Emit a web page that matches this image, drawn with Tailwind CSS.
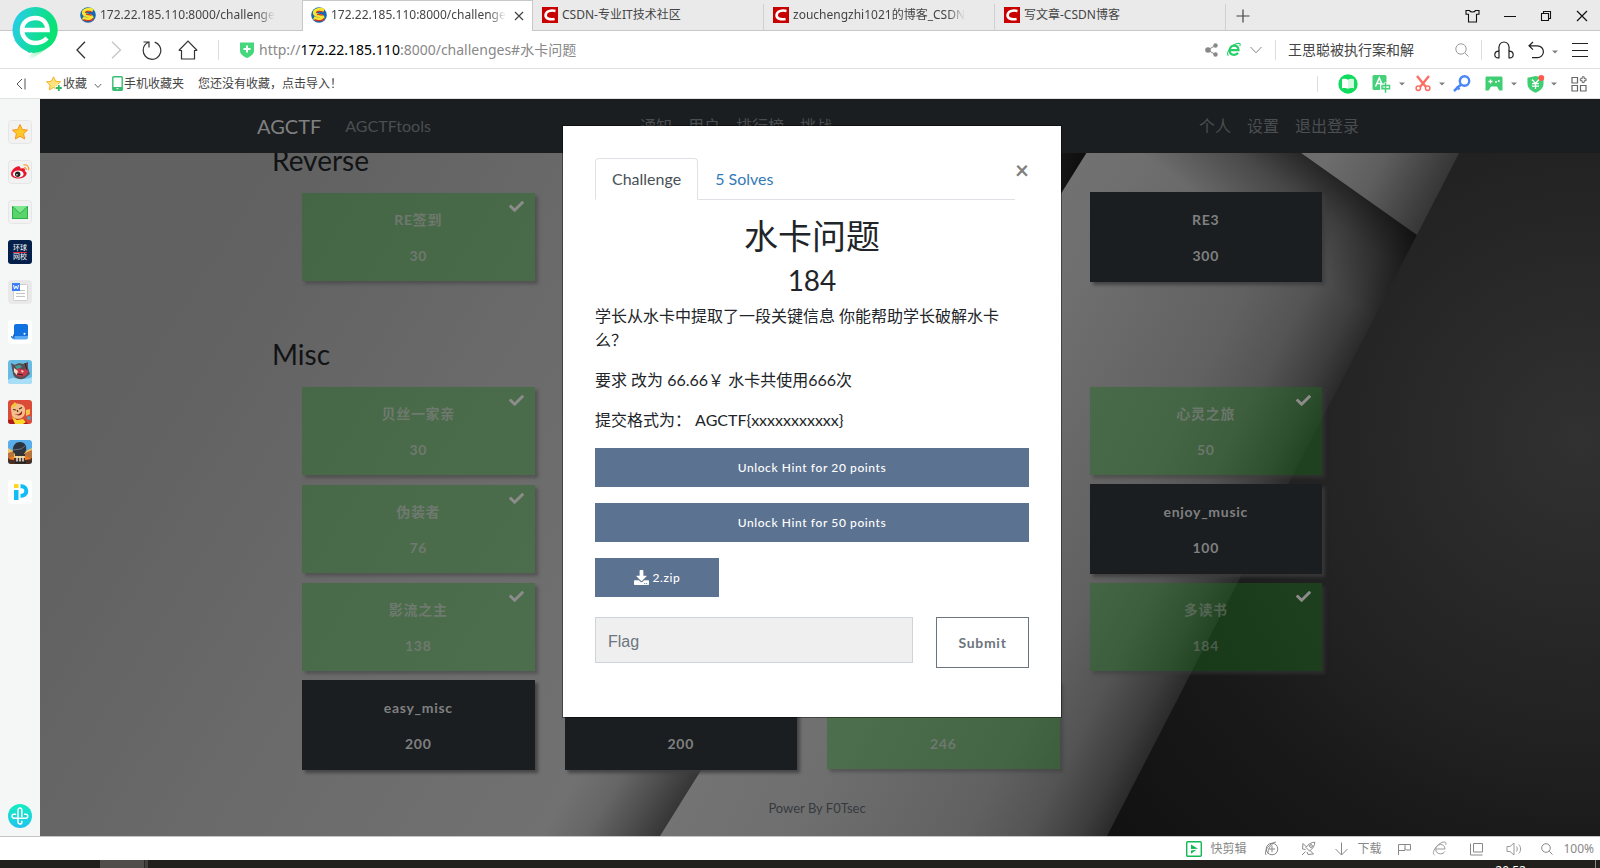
<!DOCTYPE html>
<html lang="zh-CN">
<head>
  <meta charset="UTF-8" />
  <meta name="viewport" content="width=device-width, initial-scale=1.0"/>
  <title>AGCTF</title>
  <script src="https://cdn.jsdelivr.net/npm/@tailwindcss/browser@4"></script>
</head>
<body class="h-screen flex flex-col overflow-hidden bg-white text-xs text-[#444] font-['Noto_Sans','Noto_Sans_CJK_SC',sans-serif]">

  <!-- shared icons -->
  <svg class="hidden">
    <symbol id="check" viewBox="0 0 512 512"><path fill="currentColor" d="M173.9 439.4l-166.4-166.4c-10-10-10-26.2 0-36.2l36.2-36.2c10-10 26.2-10 36.2 0L192 312.7 432.1 72.6c10-10 26.2-10 36.2 0l36.2 36.2c10 10 10 26.2 0 36.2l-294.4 294.4c-10 10-26.2 10-36.2 0z"/></symbol>
    <symbol id="caret" viewBox="0 0 6 4"><path fill="#808080" d="M0 .5h6L3 3.5z"/></symbol>
    <symbol id="site" viewBox="0 0 16 16">
      <circle cx="8" cy="8" r="7.8" fill="#1668b0"/>
      <path d="M13 3.600C9 1.500 3 2.800 3.600 6.200 4.400 9.200 11.800 7.800 11.800 10.500 11.500 13 6 12.600 2.800 10.800" fill="none" stroke="#f7e531" stroke-width="3.400"/>
      <path d="M12 5.200C8.500 3.400 5.200 4.500 5.600 6M3.500 12.600c3.500 1.800 8.800 1.400 9.700-1.400M6 7.200c2 .6 4 .4 5.500 1.200" fill="none" stroke="#d2342a" stroke-width="1.200"/>
    </symbol>
    <symbol id="csdn" viewBox="0 0 16 16">
      <rect width="16" height="16" fill="#c80000"/>
      <path d="M13.500 3.900C8.500 2.800 4 4.200 3.600 8c-.3 3.800 4.400 4.900 9 3.900" fill="none" stroke="#fff" stroke-width="2.600"/>
    </symbol>
  </svg>

  <!-- tab strip -->
  <header class="relative flex flex-none h-[31px] pl-[71px] bg-[#eaeaea]">
    <div class="absolute inset-x-0 bottom-0 h-px bg-[#c8c8c8]"></div>
    <svg class="absolute left-3 top-[7px] z-10" width="46" height="56" viewBox="0 0 46 56">
      <defs>
        <linearGradient id="lg" x1="0" y1=".3" x2="1" y2=".6"><stop offset="0" stop-color="#27cdea"/><stop offset=".55" stop-color="#14dc9c"/><stop offset="1" stop-color="#05e468"/></linearGradient>
        <linearGradient id="lt" x1=".8" y1="0" x2=".3" y2="1"><stop offset="0" stop-color="#05e468"/><stop offset="1" stop-color="#05e468" stop-opacity="0"/></linearGradient>
      </defs>
      <path d="M2 33L17 46 30 40z" fill="#2fc9ee"/>
      <path d="M44 28C42 40 26 47 16 55l-3-1 8-9z" fill="url(#lt)"/>
      <path d="M23 0a22.500 22.500 0 0 1 16 38.500C32 44 27 45 22.500 46 10 45 .5 35 .5 22.500A22.500 22.500 0 0 1 23 0z" fill="url(#lg)"/>
      <path d="M12 23h23.500C35 15 30 11 23.500 11 15.500 11 10 16 10 23s5.500 13 13.500 13c4.500 0 8.500-1.800 11.500-5" fill="none" stroke="#fff" stroke-width="4.500"/>
    </svg>
    <button class="flex items-start w-[231px] pt-[7px] pl-[9px] gap-1 text-left">
      <svg width="16" height="16" class="flex-none"><use href="#site"/></svg>
      <span class="leading-4 whitespace-nowrap mask-r-from-90%">172.22.185.110:8000/challenge</span>
    </button>
    <div class="relative flex items-start w-[231px] bg-white border-x border-t border-[#c8c8c8] pt-[6px] pl-2">
      <button class="flex gap-1 text-left">
        <svg width="16" height="16" class="flex-none"><use href="#site"/></svg>
        <span class="leading-4 whitespace-nowrap mask-r-from-90%">172.22.185.110:8000/challenge</span>
      </button>
      <button class="ml-2 mt-1" aria-label="关闭标签"><svg width="10" height="10" viewBox="0 0 10 10"><path d="M1 1l8 8M9 1L1 9" stroke="#444" stroke-width="1.200"/></svg></button>
    </div>
    <button class="flex items-start w-[231px] pt-[7px] pl-[9px] gap-1 text-left bg-linear-to-t from-[#d0d0d0] to-[#d0d0d0] bg-[length:1px_27px] bg-right-bottom bg-no-repeat">
      <svg width="16" height="16" class="flex-none"><use href="#csdn"/></svg>
      <span class="leading-4 whitespace-nowrap">CSDN-专业IT技术社区</span>
    </button>
    <button class="flex items-start w-[231px] pt-[7px] pl-[9px] gap-1 text-left bg-linear-to-t from-[#d0d0d0] to-[#d0d0d0] bg-[length:1px_27px] bg-right-bottom bg-no-repeat">
      <svg width="16" height="16" class="flex-none"><use href="#csdn"/></svg>
      <span class="leading-4 whitespace-nowrap mask-r-from-90%">zouchengzhi1021的博客_CSDN</span>
    </button>
    <button class="flex items-start w-[231px] pt-[7px] pl-[9px] gap-1 text-left bg-linear-to-t from-[#d0d0d0] to-[#d0d0d0] bg-[length:1px_27px] bg-right-bottom bg-no-repeat">
      <svg width="16" height="16" class="flex-none"><use href="#csdn"/></svg>
      <span class="leading-4 whitespace-nowrap">写文章-CSDN博客</span>
    </button>
    <button class="self-center ml-[10px]" aria-label="新标签"><svg width="14" height="14" viewBox="0 0 14 14"><path d="M7 .5v13M.5 7h13" stroke="#444" stroke-width="1.200"/></svg></button>
    <div class="flex items-center gap-6 ml-auto pr-3 text-[#111]">
      <button aria-label="皮肤"><svg width="15" height="14" viewBox="0 0 15 14"><path d="M1 1.500h3.500c.6 2 5.400 2 6 0H14v3.700h-2.500V13h-8V5.200H1z" fill="none" stroke="currentColor" stroke-width="1.100"/></svg></button>
      <button aria-label="最小化"><svg width="12" height="12" viewBox="0 0 12 12"><path d="M0 6.500h12" stroke="currentColor"/></svg></button>
      <button aria-label="还原"><svg width="12" height="12" viewBox="0 0 12 12"><path d="M1.500 3.500h7v7h-7zM3.500 3.500v-2h7v7h-2" fill="none" stroke="currentColor" stroke-width="1.100"/></svg></button>
      <button aria-label="关闭"><svg width="12" height="12" viewBox="0 0 12 12"><path d="M1 1l10 10M11 1L1 11" stroke="currentColor" stroke-width="1.200"/></svg></button>
    </div>
  </header>

  <!-- address bar -->
  <div class="flex flex-none items-center h-[38px] pl-[76px] pr-3 border-b border-[#e0e0e0]">
    <button class="mr-6" aria-label="后退"><svg width="10" height="18" viewBox="0 0 10 18"><path d="M9 .8L1 9l8 8.200" fill="none" stroke="#333" stroke-width="1.300"/></svg></button>
    <button class="mr-5" aria-label="前进"><svg width="12" height="18" viewBox="0 0 12 18"><path d="M2 .8L10.500 9 2 17.200" fill="none" stroke="#c4c4c4" stroke-width="1.300"/></svg></button>
    <button class="mr-4" aria-label="刷新"><svg width="20" height="20" viewBox="0 0 20 20"><path d="M1.500 2H7v5.500M7 2C3 3.500 1.200 6.800 1.200 10.300a8.800 8.800 0 1 0 11.500-8.200" fill="none" stroke="#333" stroke-width="1.200"/></svg></button>
    <button class="mr-5" aria-label="主页"><svg width="20" height="20" viewBox="0 0 20 20"><path d="M.8 10.500L10 1.200l9.200 9.300M.8 10.500h2.700V19h13v-8.500h2.700" fill="none" stroke="#333" stroke-width="1.200"/></svg></button>
    <div class="w-px h-5 mr-5 bg-[#dcdcdc]"></div>
    <svg width="16" height="16" viewBox="0 0 16 16" class="mr-1"><path d="M1 .5h14v8.500c0 3-3.500 5.500-7 7-3.500-1.500-7-4-7-7z" fill="#45d77c"/><path d="M8 3.500v7M4.500 7h7" stroke="#fff" stroke-width="2"/></svg>
    <a href="#水卡问题" class="text-sm leading-5 text-[#888]">http://<span class="text-black">172.22.185.110</span>:8000/challenges#水卡问题</a>
    <div class="flex items-center ml-auto">
      <button class="mr-2" aria-label="分享"><svg width="13" height="14" viewBox="0 0 13 14"><path d="M2.500 7l8-4.500M2.500 7l8 4.500" stroke="#888"/><circle cx="3" cy="7" r="2.800" fill="#888"/><circle cx="10.500" cy="2.500" r="2.200" fill="#888"/><circle cx="10.500" cy="11.500" r="2.200" fill="#888"/></svg></button>
      <button class="mr-2" aria-label="极速模式"><svg width="15" height="15" viewBox="0 0 15 15"><path d="M4 8.200h8.500C12.500 5 10.500 3.600 8.200 3.600 5.400 3.600 3.700 5.800 3.700 8.500s1.800 4.300 4.300 4.300c1.900 0 3.200-.6 4-1.900" fill="none" stroke="#26cf6a" stroke-width="2.200"/><path d="M2.500 13.500C-1 11.500 6 1.500 12.500 1.200c2 0 2 1.300 1.300 2.800" fill="none" stroke="#26cf6a" stroke-width="1.100"/></svg></button>
      <button class="mr-3" aria-label="展开"><svg width="14" height="8" viewBox="0 0 14 8"><path d="M1.500 1L7 6.800 12.500 1" fill="none" stroke="#888"/></svg></button>
      <div class="w-px h-5 mr-3 bg-[#dcdcdc]"></div>
      <input type="text" aria-label="搜索" value="王思聪被执行案和解" class="w-[167px] text-sm leading-5 text-[#444] outline-none">
      <button class="mr-3" aria-label="搜索"><svg width="14" height="14" viewBox="0 0 14 14"><circle cx="6" cy="6" r="5.200" fill="none" stroke="#999"/><path d="M9.800 9.800l3.700 3.700" stroke="#999"/></svg></button>
      <div class="w-px h-5 mr-3 bg-[#dcdcdc]"></div>
      <button class="mr-[14px]" aria-label="音乐"><svg width="20" height="18" viewBox="0 0 20 18"><path d="M5 10.200C4 4 6.500 1 10 1s6 3 5 9.200" fill="none" stroke="#222" stroke-width="1.200"/><path d="M5 10.200v6.600C2 17.500.8 15.500.8 13.700S2.200 10.300 5 10.200zM15 10.200v6.600c3 .7 4.200-1.300 4.200-3.100s-1.400-3.400-4.200-3.500z" fill="none" stroke="#222" stroke-width="1.200"/></svg></button>
      <button class="flex items-center gap-2 mr-[14px]" aria-label="恢复"><svg width="16" height="18" viewBox="0 0 16 18"><path d="M5 1L1 4.800 5 8.600M1 4.800h8.500a5.900 5.900 0 0 1 0 11.800H4" fill="none" stroke="#222" stroke-width="1.200"/></svg><svg width="6" height="4" class="mt-1"><use href="#caret"/></svg></button>
      <button aria-label="菜单"><svg width="16" height="14" viewBox="0 0 16 14"><path d="M0 .5h16M0 7.500h16M0 13.500h16" stroke="#222"/></svg></button>
    </div>
  </div>

  <!-- bookmarks -->
  <div class="flex flex-none items-center h-[30px] pl-4 pr-[13px] border-b border-[#e0e3e2]">
    <button class="mr-5" aria-label="收起"><svg width="10" height="12" viewBox="0 0 10 12"><path d="M6 1L1 6l5 5M9 .5v11" fill="none" stroke="#555"/></svg></button>
    <button class="flex items-center">
      <svg width="17" height="16" viewBox="0 0 17 16"><path d="M7.500.8l2.100 4.400 4.900.6-3.600 3.300 1 4.800-4.400-2.400-4.300 2.400.9-4.800L.5 5.800l4.900-.6z" fill="#fde37c" stroke="#f0b429"/><path d="M12.800 8.500v7M9.300 12h7" stroke="#fff" stroke-width="4"/><path d="M12.800 9v6M9.800 12h6" stroke="#2fb865" stroke-width="1.800"/></svg>
      <span>收藏</span>
      <svg width="8" height="6" viewBox="0 0 8 6" class="ml-[7px] mt-1"><path d="M.8 1L4 4.500 7.200 1" fill="none" stroke="#666"/></svg>
    </button>
    <button class="flex items-center ml-[10px] mr-[14px] gap-px"><svg width="11" height="15" viewBox="0 0 11 15"><rect x=".8" y=".8" width="9.400" height="13.400" rx=".8" fill="#fff" stroke="#37bd70" stroke-width="1.400"/><path d="M1 11h9v3H1z" fill="#37bd70"/><path d="M4.500 12.700h2" stroke="#fff"/></svg><span>手机收藏夹</span></button>
    <span>您还没有收藏，点击导入！</span>
    <div class="flex items-center ml-auto">
      <div class="w-px h-4 mr-5 bg-[#dcdcdc]"></div>
      <button class="mr-[14px]" aria-label="小说"><svg width="20" height="20" viewBox="0 0 20 20"><circle cx="10" cy="10" r="9.700" fill="#0fdc5c"/><path d="M4 5.300c2.500-.8 4.500-.6 6 .5v9c-1.500-.9-3.500-1-6-.5z" fill="#fff"/><path d="M16 5.300c-2.500-.8-4.500-.6-6 .5v9c1.500-.9 3.500-1 6-.5z" fill="#d4f9e1"/></svg></button>
      <button class="flex items-center gap-2 mr-[10px]" aria-label="翻译"><svg width="19" height="19" viewBox="0 0 19 19"><rect x=".5" y="1" width="14" height="15" rx="1.500" fill="#45d07a"/><path d="M3.500 12.500L7.300 4l3.600 8.500M4.800 9.500h4.800" fill="none" stroke="#fff" stroke-width="1.500"/><path d="M13.500 8.500V19M9.500 11h8.200v4H9.500z" fill="none" stroke="#fff" stroke-width="3"/><path d="M13.500 9v9.800M10 11.500h7.500v3.200H10z" fill="none" stroke="#45d07a" stroke-width="1.500"/></svg><svg width="6" height="4"><use href="#caret"/></svg></button>
      <button class="flex items-center gap-2 mr-2" aria-label="截图"><svg width="16" height="17" viewBox="0 0 16 17"><path d="M2 1l9 11M14 1L5 12" stroke="#fb6f64" stroke-width="2.400"/><circle cx="3.300" cy="13.300" r="2.200" fill="none" stroke="#fb6f64" stroke-width="1.500"/><circle cx="12.700" cy="13.300" r="2.200" fill="none" stroke="#fb6f64" stroke-width="1.500"/></svg><svg width="6" height="4"><use href="#caret"/></svg></button>
      <button class="mr-[14px]" aria-label="密码"><svg width="18" height="17" viewBox="0 0 18 17"><circle cx="11.500" cy="6" r="4.700" fill="none" stroke="#4a86f7" stroke-width="2.400"/><path d="M8 9.500L1 16M3.500 11.500l3 3" stroke="#4a86f7" stroke-width="2.400"/></svg></button>
      <button class="flex items-center gap-2 mr-[10px]" aria-label="游戏"><svg width="18" height="15" viewBox="0 0 18 15"><path d="M2 .5h14c1 0 1.500.6 1.500 1.500v12.500h-3.200L12 10.500H6L3.700 14.500H.5V2C.5 1.100 1 .5 2 .5z" fill="#3fce72"/><path d="M5.500 3.500v4M3.500 5.500h4" stroke="#fff" stroke-width="1.300"/><circle cx="11" cy="6" r="1" fill="#fff"/><circle cx="13.800" cy="5" r="1" fill="#fff"/></svg><svg width="6" height="4"><use href="#caret"/></svg></button>
      <button class="flex items-center gap-[6px] mr-[14px]" aria-label="网银"><svg width="18" height="18" viewBox="0 0 18 18"><path d="M8.500 1L16.500 2.800V9c0 4-3.500 7-8 8.800C4 16 .5 13 .5 9V2.800z" fill="#3fce72"/><path d="M5 4.500l3.500 4 3.500-4M5 8.700h7M5 11.200h7M8.500 8.500V14" fill="none" stroke="#fff" stroke-width="1.300"/><circle cx="14.300" cy="3" r="2.900" fill="#ff5a4e"/></svg><svg width="6" height="4"><use href="#caret"/></svg></button>
      <button aria-label="扩展"><svg width="16" height="16" viewBox="0 0 16 16"><path d="M1 1.500h5.500v5.500H1zM1 9.500h5.500V15H1zM9.500 9.500H15V15H9.500z" fill="none" stroke="#666" stroke-width="1.200"/><path d="M11.200.8h2v1.900h1.900v2h-1.900v1.900h-2V4.700H9.300v-2h1.900z" fill="none" stroke="#666"/></svg></button>
    </div>
  </div>

  <main class="flex flex-1 min-h-0">
    <!-- side bar -->
    <aside class="flex flex-col flex-none items-center w-10 pt-[21px] pb-[6px] gap-4 bg-[#f4f7f6]">
      <button aria-label="收藏夹"><svg width="24" height="24" viewBox="0 0 24 24"><rect x=".5" y=".5" width="23" height="23" rx="3" fill="#f2f2f2" stroke="#e6e6e6"/><path d="M12 4.500l2.300 5 5.200.6-3.900 3.600 1.100 5.300L12 16.300 7.300 19l1.100-5.300-3.900-3.600 5.200-.6z" fill="#ffc928" stroke="#f7941e"/></svg></button>
      <button aria-label="微博"><svg width="24" height="24" viewBox="0 0 24 24"><rect x=".5" y=".5" width="23" height="23" rx="3" fill="#f2f2f2" stroke="#e6e6e6"/><path d="M3 14c0-4 5.500-8.500 8.500-7.500 1.200.4 1 2 1 2s4.500-1.200 4.500 1.200c0 .8-.4 1.300-.4 1.300 4.400 1.500 1.400 7.500-6 7.500C6.500 18.500 3 17 3 14z" fill="#e6162d"/><ellipse cx="10.300" cy="14" rx="5.300" ry="3.600" fill="#fff"/><circle cx="9.700" cy="14.200" r="2.700" fill="#222"/><circle cx="8.900" cy="14.800" r=".8" fill="#fff"/><path d="M15.500 5c3.500-.8 6 2 5 5.200M16 7.800c1.500-.3 2.500.8 2.100 2.200" fill="none" stroke="#f9a03f" stroke-width="1.300"/></svg></button>
      <button aria-label="邮箱"><svg width="24" height="24" viewBox="0 0 24 24"><rect x=".5" y=".5" width="23" height="23" rx="3" fill="#f2f2f2" stroke="#e6e6e6"/><rect x="4.500" y="6.500" width="15" height="12" fill="#5bd36b" stroke="#26b34c"/><path d="M4.500 6h15L12 13.500z" fill="#82e690"/><path d="M4.500 6.500l7.500 7 7.500-7" fill="none" stroke="#26b34c"/></svg></button>
      <button aria-label="环球网校" class="flex flex-col items-center justify-center w-6 h-6 rounded-[3px] bg-[#04204a] text-white text-[7px] leading-[8px]"><span class="border-b border-[#e0243a]">环球</span><span>网校</span></button>
      <button aria-label="文档"><svg width="24" height="24" viewBox="0 0 24 24"><rect width="24" height="24" rx="4" fill="#e9e9e9"/><rect x="5.500" y="4.500" width="14" height="16" rx="1" fill="#fff" stroke="#cfcfcf"/><path d="M12 10.500h5M8 13.500h9M8 16.500h9" stroke="#c4c4c4"/><rect x="4" y="3" width="8" height="8" fill="#3d7df5"/><path d="M5.500 5l1 4L8 6l1.500 3 1-4" fill="none" stroke="#fff"/></svg></button>
      <button aria-label="阅读"><svg width="24" height="24" viewBox="0 0 24 24"><rect width="24" height="24" rx="3" fill="#fff"/><path d="M8 4h10c1.200 0 2 .8 2 2v10H6V6c0-1.200.8-2 2-2z" fill="#1272e0"/><path d="M3 16c1.500 1.500 4 0 4 0h13v1.500c0 1-.8 2-2 2H6.500C4.500 19.500 3 18 3 16z" fill="#5aa9f5"/><path d="M3 16.500c2 1.500 3 0 3-2v4" fill="none" stroke="#0d56ba"/><circle cx="16.500" cy="13.800" r="1" fill="#fff"/></svg></button>
      <button aria-label="捕鱼"><svg width="24" height="24" viewBox="0 0 24 24"><rect width="24" height="24" rx="3" fill="#68bce4"/><path d="M0 20c6-5 14 2 24-3v4a3 3 0 0 1-3 3H3a3 3 0 0 1-3-3z" fill="#a8dff6"/><path d="M3 3l4 2c2-2 6-2 8-1l5-2v6l2 6-5 4c-5 3-11 0-12-4z" fill="#5b4f56"/><path d="M7 10l4-2 5 2 3-3 1 5c-2 5-8 6-12 3z" fill="#c8394a"/><path d="M6 8l4 3-1 4-3-3zM13 10l3 1-2 2z" fill="#f0dccb"/><path d="M7 6l5-1 2 2-5 2z" fill="#3f9e94"/><path d="M9 14l6 1M17 3l2 7" stroke="#2a2228"/></svg></button>
      <button aria-label="斗地主"><svg width="24" height="24" viewBox="0 0 24 24"><rect width="24" height="24" rx="3" fill="#dc4a38"/><path d="M3 10C2 5 7 2.500 11 4c5 0 7 4 6 9-1 6-9 8-13 3z" fill="#f4bd8c"/><path d="M3 6l4-4 2 3-5 3z" fill="#f6c42c"/><path d="M7 14c3 1 5 0 7-3 1 4-3 6-7 3z" fill="#8c1c1c"/><path d="M0 20l8-1 9 1 3 4H3a3 3 0 0 1-3-3z" fill="#ad1a1a"/><path d="M4 17l5 3 6-1 3 3-3 2H7z" fill="#ffd62a"/><path d="M5 9.500l3 .5M11 9l3-1.500M9 10l1 2" stroke="#562a18" stroke-width="1.200"/><path d="M18 10l4-1v5l-4 2z" fill="#f7c34d"/><circle cx="21" cy="18" r="2" fill="#4ea1bf"/></svg></button>
      <button aria-label="吃鸡"><svg width="24" height="24" viewBox="0 0 24 24"><rect width="24" height="24" rx="3" fill="#57aeea"/><path d="M0 8l5 3 6-1 7 1 6-3v10H0z" fill="#f2c565"/><path d="M0 13l6-2v7H0zM17 13l7-3v8h-7z" fill="#b9743c"/><path d="M0 18h24v3a3 3 0 0 1-3 3H3a3 3 0 0 1-3-3z" fill="#4a2e22"/><path d="M0 19l6-3v4zM17 16l7 3-7 1z" fill="#f27b23"/><path d="M5 12C4 5 8 2 12 2c5 0 7 4 6 9l-2 3H7z" fill="#2d343d"/><path d="M5 10l8-1 4-3" fill="none" stroke="#69737f"/><path d="M9 14v8M12 14v8M15 14v8" stroke="#e7e2dd" stroke-width="1.500"/><path d="M7 15h10" stroke="#333" stroke-width="2"/><path d="M7 22.500h11" stroke="#222" stroke-width="2"/></svg></button>
      <button aria-label="PP视频"><svg width="24" height="24" viewBox="0 0 24 24"><rect width="24" height="24" rx="3" fill="#fff"/><path d="M6 4h4.500v4H6z" fill="#ffd51d"/><path d="M6 10h4.500v10H6z" fill="#10bdf5"/><path d="M12.500 6.200h1a4.800 4.800 0 0 1 0 9.600h-1" fill="none" stroke="#10bdf5" stroke-width="4"/></svg></button>
      <button class="mt-auto" aria-label="添加"><svg width="24" height="28" viewBox="0 0 24 28"><defs><linearGradient id="ad" x1="0" y1="0" x2="0" y2="1"><stop offset="0" stop-color="#13eec0"/><stop offset="1" stop-color="#1fc3ee"/></linearGradient></defs><circle cx="12" cy="14" r="12" fill="url(#ad)"/><path d="M13.800 14.500V8a1.900 1.900 0 0 0-3.800 0v12.200a1.900 1.900 0 0 0 3.800 0v-1M11.500 16.200h6.300a1.900 1.900 0 0 0 0-3.900h-1.200M7.500 12.300H6a1.900 1.900 0 0 0 0 3.900h3" fill="none" stroke="#fff" stroke-width="1.500" stroke-linecap="round"/></svg></button>
    </aside>

    <!-- web page -->
    <div class="relative flex-1 overflow-hidden font-['Lato','Noto_Sans_CJK_SC',sans-serif]">
      <svg class="absolute inset-0 w-full h-full" viewBox="0 0 1560 737" preserveAspectRatio="none">
        <defs>
          <linearGradient id="left" gradientUnits="userSpaceOnUse" x1="0" y1="0" x2="777" y2="485">
            <stop offset="0" stop-color="#606060"/><stop offset=".3" stop-color="#626262"/><stop offset=".6" stop-color="#6b6b6b"/><stop offset=".89" stop-color="#717171"/><stop offset=".93" stop-color="#666"/><stop offset=".97" stop-color="#4c4c4c"/><stop offset="1" stop-color="#363636"/>
          </linearGradient>
          <linearGradient id="mid" gradientUnits="userSpaceOnUse" x1="0" y1="0" x2="1144" y2="589">
            <stop offset=".68" stop-color="#747474"/><stop offset=".78" stop-color="#6f6f6f"/><stop offset=".9" stop-color="#616161"/><stop offset=".945" stop-color="#545454"/><stop offset=".98" stop-color="#3d3d3d"/><stop offset="1" stop-color="#2a2a2a"/>
          </linearGradient>
          <linearGradient id="fold" gradientUnits="userSpaceOnUse" x1="1319" y1="95" x2="1265" y2="171">
            <stop offset="0" stop-opacity=".6"/><stop offset=".4" stop-opacity=".28"/><stop offset="1" stop-opacity="0"/>
          </linearGradient>
          <linearGradient id="tri" gradientUnits="userSpaceOnUse" x1="0" y1="0" x2="1144" y2="589">
            <stop offset=".91" stop-color="#6d6d6d"/><stop offset=".95" stop-color="#5e5e5e"/><stop offset="1" stop-color="#363636"/>
          </linearGradient>
          <radialGradient id="right" gradientUnits="userSpaceOnUse" cx="1540" cy="340" r="600">
            <stop offset="0" stop-color="#313131"/><stop offset=".52" stop-color="#212121"/><stop offset=".7" stop-color="#191919"/><stop offset="1" stop-color="#121212"/>
          </radialGradient>
          <radialGradient id="corner" gradientUnits="userSpaceOnUse" cx="1047" cy="54" r="150">
            <stop offset="0" stop-opacity=".75"/><stop offset=".4" stop-opacity=".6"/><stop offset="1" stop-opacity="0"/>
          </radialGradient>
        </defs>
        <rect width="1560" height="737" fill="url(#right)"/>
        <path d="M0 0h1447L1067 737H0z" fill="url(#mid)"/>
        <path d="M1080 0h367L1067 737H620z" fill="url(#fold)"/>
        <path d="M1185 0h262l-70 136z" fill="url(#tri)"/>
        <path d="M0 0h1080L620 737H0z" fill="url(#left)"/>
        <path d="M0 0h1080L620 737H0z" fill="url(#corner)"/>
      </svg>

      <div class="relative pr-4">
        <div class="max-w-[1140px] mx-auto px-[30px] pt-[45px]">
          <section class="mb-14">
            <h3 class="text-[28px] leading-8 text-[#111315] mb-4">Reverse</h3>
            <div class="grid grid-cols-4 gap-x-[30px] gap-y-2 px-[30px] text-sm leading-5 font-bold tracking-wider">
              <button class="relative h-[88px] my-px pt-[17px] pb-4 bg-[rgb(27,109,27)]/40 text-[#808080]/70 shadow-[3px_3px_3px_rgba(60,60,60,0.5)]">
                <svg width="15" height="15" class="absolute top-[6px] right-[11px] text-[#8c8c8c]"><use href="#check"/></svg>
                <p class="mb-4">RE签到</p><p>30</p>
              </button>
              <button class="h-[90px] pt-[18px] pb-4 col-start-4 bg-[#1a1e20] text-[#808080] shadow-[3px_3px_3px_rgba(60,60,60,0.8)]"><p class="mb-4">RE3</p><p>300</p></button>
            </div>
          </section>

          <section>
            <h3 class="text-[28px] leading-8 text-[#111315] mb-4">Misc</h3>
            <div class="grid grid-cols-4 gap-x-[30px] gap-y-2 px-[30px] text-sm leading-5 font-bold tracking-wider">
              <button class="relative h-[88px] my-px pt-[17px] pb-4 bg-[rgb(27,109,27)]/40 text-[#808080]/70 shadow-[3px_3px_3px_rgba(60,60,60,0.5)]">
                <svg width="15" height="15" class="absolute top-[6px] right-[11px] text-[#8c8c8c]"><use href="#check"/></svg>
                <p class="mb-4">贝丝一家亲</p><p>30</p>
              </button>
              <button class="relative h-[88px] my-px pt-[17px] pb-4 col-start-4 bg-[rgb(27,109,27)]/40 text-[#808080]/70 shadow-[3px_3px_3px_rgba(60,60,60,0.5)]">
                <svg width="15" height="15" class="absolute top-[6px] right-[11px] text-[#8c8c8c]"><use href="#check"/></svg>
                <p class="mb-4">心灵之旅</p><p>50</p>
              </button>
              <button class="relative h-[88px] my-px pt-[17px] pb-4 bg-[rgb(27,109,27)]/40 text-[#808080]/70 shadow-[3px_3px_3px_rgba(60,60,60,0.5)]">
                <svg width="15" height="15" class="absolute top-[6px] right-[11px] text-[#8c8c8c]"><use href="#check"/></svg>
                <p class="mb-4">伪装者</p><p>76</p>
              </button>
              <button class="h-[90px] pt-[18px] pb-4 col-start-4 bg-[#1a1e20] text-[#808080] shadow-[3px_3px_3px_rgba(60,60,60,0.8)]"><p class="mb-4">enjoy_music</p><p>100</p></button>
              <button class="relative h-[88px] my-px pt-[17px] pb-4 bg-[rgb(27,109,27)]/40 text-[#808080]/70 shadow-[3px_3px_3px_rgba(60,60,60,0.5)]">
                <svg width="15" height="15" class="absolute top-[6px] right-[11px] text-[#8c8c8c]"><use href="#check"/></svg>
                <p class="mb-4">影流之主</p><p>138</p>
              </button>
              <button class="relative h-[88px] my-px pt-[17px] pb-4 col-start-4 bg-[rgb(27,109,27)]/40 text-[#808080]/50 shadow-[3px_3px_3px_rgba(60,60,60,0.5)]">
                <svg width="15" height="15" class="absolute top-[6px] right-[11px] text-[#8c8c8c]"><use href="#check"/></svg>
                <p class="mb-4">多读书</p><p>184</p>
              </button>
              <button class="h-[90px] pt-[18px] pb-4 bg-[#1a1e20] text-[#808080] shadow-[3px_3px_3px_rgba(60,60,60,0.8)]"><p class="mb-4">easy_misc</p><p>200</p></button>
              <button class="h-[90px] pt-[18px] pb-4 bg-[#1a1e20] text-[#808080] shadow-[3px_3px_3px_rgba(60,60,60,0.8)]"><p class="mb-4">&nbsp;</p><p>200</p></button>
              <button class="h-[88px] my-px pt-[17px] pb-4 bg-[rgb(27,109,27)]/40 text-[#808080]/70 shadow-[3px_3px_3px_rgba(60,60,60,0.5)]"><p class="mb-4">&nbsp;</p><p>246</p></button>
            </div>
          </section>
        </div>
        <footer class="pt-7 pl-[10px] text-center text-[13px] leading-5 text-[#363a3e]">Power By F0Tsec</footer>
      </div>

      <nav class="absolute inset-x-0 top-0 pr-4 bg-[#1a1e20] text-base text-[#4b4e50]">
        <div class="flex items-center max-w-[1140px] h-[54px] mx-auto px-[15px]">
          <a href="#" class="mr-4 text-xl text-[#808080]">AGCTF</a>
          <a href="#" class="px-2">AGCTFtools</a>
          <div class="flex ml-[193px]">
            <a href="#" class="px-2">通知</a>
            <a href="#" class="px-2">用户</a>
            <a href="#" class="px-2">排行榜</a>
            <a href="#" class="px-2">挑战</a>
          </div>
          <div class="flex ml-auto">
            <a href="#" class="px-2">个人</a>
            <a href="#" class="px-2">设置</a>
            <a href="#" class="px-2">退出登录</a>
          </div>
        </div>
      </nav>

      <!-- challenge dialog -->
      <div class="absolute inset-x-0 top-[26px] pr-4">
        <div role="dialog" aria-label="水卡问题" class="w-[500px] mx-auto border border-black/40 bg-white bg-clip-padding px-8 pt-8 pb-[49px] text-base text-[#212529]">
          <div class="flex items-start">
            <div class="flex flex-1 border-b border-[#dee2e6]">
              <button class="-mb-px px-4 py-2 border border-[#dee2e6] border-b-white rounded-t bg-white text-[#495057]">Challenge</button>
              <button class="-mb-px px-4 py-2 border border-transparent text-[#337ab7]">5 Solves</button>
            </div>
            <button class="w-[14px] text-2xl leading-6 font-bold text-[#808080]" aria-label="关闭">×</button>
          </div>
          <h2 class="pt-4 mb-2 text-center text-[34px] leading-10">水卡问题</h2>
          <h3 class="mb-2 text-center text-[28px] leading-8">184</h3>
          <p class="mb-4">学长从水卡中提取了一段关键信息 你能帮助学长破解水卡么？</p>
          <p class="mb-4">要求 改为 66.66￥ 水卡共使用666次</p>
          <p class="mb-4">提交格式为： AGCTF{xxxxxxxxxxx}</p>
          <button class="block w-full h-[39px] mb-4 bg-[#5b7290] text-white text-xs font-medium tracking-wider">Unlock Hint for 20 points</button>
          <button class="block w-full h-[39px] mb-4 bg-[#5b7290] text-white text-xs font-medium tracking-wider">Unlock Hint for 50 points</button>
          <a href="#" class="flex items-center justify-center gap-1 w-[124px] h-[39px] mb-5 bg-[#5b7290] text-white text-xs font-medium tracking-wider">
            <svg width="15" height="15" viewBox="0 0 512 512"><path fill="#fff" d="M216 0h80c13.300 0 24 10.700 24 24v168h87.700c17.800 0 26.700 21.500 14.100 34.100L269.700 378.300c-7.500 7.500-19.800 7.500-27.300 0L90.100 226.100c-12.600-12.600-3.700-34.100 14.100-34.100H192V24c0-13.300 10.700-24 24-24zm296 376v112c0 13.300-10.700 24-24 24H24c-13.300 0-24-10.700-24-24V376c0-13.300 10.700-24 24-24h146.700l49 49c20.100 20.100 52.500 20.100 72.600 0l49-49H488c13.300 0 24 10.700 24 24zm-124 88c0-11-9-20-20-20s-20 9-20 20 9 20 20 20 20-9 20-20zm64 0c0-11-9-20-20-20s-20 9-20 20 9 20 20 20 20-9 20-20z"/></svg>
            <span>2.zip</span>
          </a>
          <form class="flex items-start gap-[23px]">
            <input type="text" placeholder="Flag" aria-label="Flag" class="flex-1 min-w-0 h-[46px] px-3 pt-1 border border-[#ced4da] bg-[#efefef] placeholder-[#6c757d] font-['Liberation_Sans',sans-serif]">
            <button type="button" class="w-[93px] h-[51px] border border-[#6c757d] text-[#6c757d] text-sm font-bold tracking-wider">Submit</button>
          </form>
        </div>
      </div>
    </div>
  </main>

  <!-- status bar -->
  <div class="flex flex-none items-center justify-end h-6 pr-[6px] border-t border-[#c4c4c4] text-[#888]">
    <button class="flex items-center gap-2 mr-[18px]"><svg width="16" height="16" viewBox="0 0 16 16"><rect x=".7" y=".7" width="14.600" height="14.600" rx="1" fill="#fff" stroke="#10b956" stroke-width="1.400"/><path d="M5 3.500l7 4.200-7 .2zM5 9.500l5.500-.8L5 12.800z" fill="#10b956"/></svg><span>快剪辑</span></button>
    <button class="mr-[22px]" aria-label="加速"><svg width="15" height="15" viewBox="0 0 15 15"><circle cx="8" cy="8" r="5.800" fill="none" stroke="#888"/><path d="M8 4.800v6.400M4.800 8h6.400M2 14C-.5 10 6 1.500 12 1M4 12.500C3.500 9 6.500 4 9.500 2.500" fill="none" stroke="#888"/></svg></button>
    <button class="mr-[18px]" aria-label="火箭"><svg width="15" height="15" viewBox="0 0 15 15"><path d="M5 6.500C7.500 3 10.500 1.200 13.800 1.200c0 3.300-1.800 6.300-5.300 8.800zM5.500 6L2 2.500 1.500 8l3 .5M9 9.500l3.500 3.500-5.500.5L6 11M4.500 10.500L1 14" fill="none" stroke="#888"/><circle cx="10" cy="5" r="1.400" fill="none" stroke="#888"/></svg></button>
    <button class="flex items-center gap-2 mr-4"><svg width="15" height="14" viewBox="0 0 15 14"><path d="M7.500.5v12.500M1.500 7l6 6 6-6" fill="none" stroke="#888"/></svg><span>下载</span></button>
    <button class="mr-5" aria-label="标记"><svg width="15" height="14" viewBox="0 0 15 14"><path d="M1.500 13V2.500H8v6H1.500M8 2.500h5.500v5.500H9.500L8 6.500" fill="none" stroke="#888"/></svg></button>
    <button class="mr-[22px]" aria-label="内核"><svg width="15" height="15" viewBox="0 0 15 15"><path d="M4 8h9C13 5 11 3.500 8.500 3.500S3.700 5.500 3.700 8.300s2 4.500 4.800 4.500c2 0 3.500-.8 4.300-2.300M2.500 14C-1.500 12 6 1 12.500 1c1.500 0 1.800 1.200 1.200 2.800" fill="none" stroke="#999"/></svg></button>
    <button class="mr-[22px]" aria-label="窗口"><svg width="15" height="14" viewBox="0 0 15 14"><path d="M4.500 1.500h9v8.500h-9zM1.500 1.500v11.500h12" fill="none" stroke="#888"/></svg></button>
    <button class="mr-[18px]" aria-label="声音"><svg width="17" height="14" viewBox="0 0 17 14"><path d="M1 4.500h3L8 1v12L4 9.500H1zM10.500 4.500c1 1.500 1 3.500 0 5M12.800 2.500c2.400 2.500 2.400 6.500 0 9" fill="none" stroke="#999"/></svg></button>
    <button class="flex items-center gap-[10px]"><svg width="12" height="12" viewBox="0 0 12 12"><circle cx="5" cy="5" r="4.300" fill="none" stroke="#888"/><path d="M8.200 8.200l3.300 3.300" stroke="#888"/></svg><span>100%</span></button>
  </div>

  <!-- task bar -->
  <div class="flex flex-none h-2 pl-[100px] overflow-hidden bg-[#21201d] text-white">
    <div class="w-11 bg-[#4f4e4b]"></div>
    <div class="w-1 border-l border-[#2a2926] bg-[#42413e]"></div>
    <span class="ml-auto mr-[69px] pt-[3px] leading-4">20:52</span>
    <div class="w-px mr-1 bg-[#8a8a88]"></div>
  </div>
</body>
</html>
